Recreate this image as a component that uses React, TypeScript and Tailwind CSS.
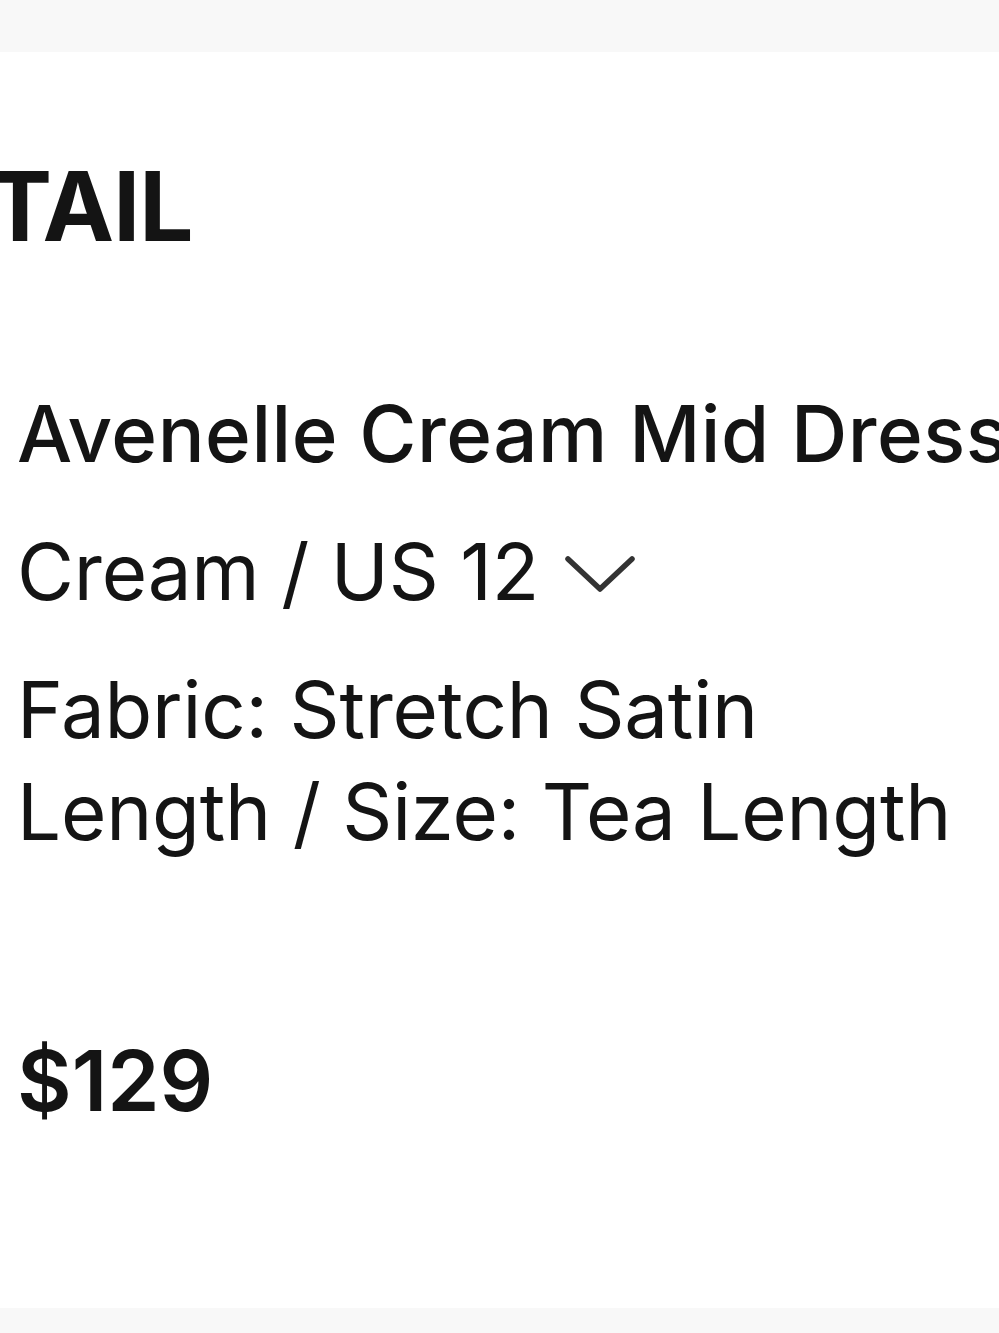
import React from "react";

export default function App() {
  return (
    <div className="w-[999px] h-[1333px] bg-white flex flex-col overflow-hidden" style={{ fontFamily: "Inter, 'Noto Sans', sans-serif" }}>
      <div className="h-[52px] bg-[#f8f8f8] shrink-0" />
      <div className="flex-1 flex flex-col pl-[17px] text-[#141414]">
        <div className="mt-[106px] -ml-[29px] text-[96px] leading-none font-bold tracking-[-1px] whitespace-nowrap">TAIL</div>
        <div className="mt-[129px] text-[78px] leading-[101px] font-medium whitespace-nowrap tracking-[0.5px]">Avenelle Cream Mid Dress</div>
        <div className="mt-[37px] flex items-center gap-[25px] text-[78px] leading-[101px] whitespace-nowrap">
          <span className="tracking-[-0.2px]">Cream / US 12</span>
          <svg width="72" height="44" viewBox="0 0 72 44" fill="none" className="mt-[2px]">
            <polyline points="4,8 36,38 68,8" stroke="#333333" strokeWidth="5.5" strokeLinecap="round" strokeLinejoin="round" />
          </svg>
        </div>
        <div className="mt-[37px] text-[78px] leading-[102px] whitespace-nowrap tracking-[-0.2px]">
          <div>Fabric: Stretch Satin</div>
          <div>Length / Size: Tea Length</div>
        </div>
        <div className="mt-[167px] text-[84px] leading-[101px] font-semibold whitespace-nowrap">$129</div>
      </div>
      <div className="h-[25px] bg-[#f8f8f8] shrink-0" />
    </div>
  );
}
